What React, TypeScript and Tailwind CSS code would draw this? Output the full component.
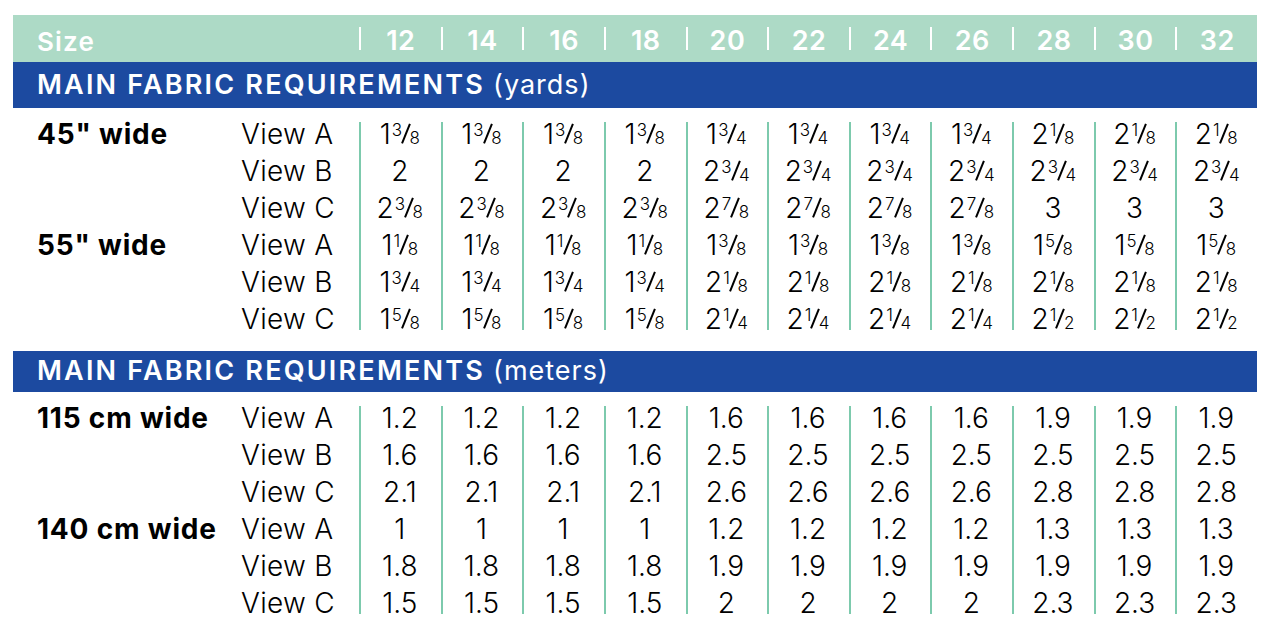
import React from 'react';

const sizes = ['12', '14', '16', '18', '20', '22', '24', '26', '28', '30', '32'];

interface Group {
  label: string;
  views: { name: string; values: string[] }[];
}

// fractions are written as "1 3/8" and drawn as stacked numerals
const yards: Group[] = [
  {
    label: '45" wide',
    views: [
      { name: 'View A', values: ['1 3/8', '1 3/8', '1 3/8', '1 3/8', '1 3/4', '1 3/4', '1 3/4', '1 3/4', '2 1/8', '2 1/8', '2 1/8'] },
      { name: 'View B', values: ['2', '2', '2', '2', '2 3/4', '2 3/4', '2 3/4', '2 3/4', '2 3/4', '2 3/4', '2 3/4'] },
      { name: 'View C', values: ['2 3/8', '2 3/8', '2 3/8', '2 3/8', '2 7/8', '2 7/8', '2 7/8', '2 7/8', '3', '3', '3'] },
    ],
  },
  {
    label: '55" wide',
    views: [
      { name: 'View A', values: ['1 1/8', '1 1/8', '1 1/8', '1 1/8', '1 3/8', '1 3/8', '1 3/8', '1 3/8', '1 5/8', '1 5/8', '1 5/8'] },
      { name: 'View B', values: ['1 3/4', '1 3/4', '1 3/4', '1 3/4', '2 1/8', '2 1/8', '2 1/8', '2 1/8', '2 1/8', '2 1/8', '2 1/8'] },
      { name: 'View C', values: ['1 5/8', '1 5/8', '1 5/8', '1 5/8', '2 1/4', '2 1/4', '2 1/4', '2 1/4', '2 1/2', '2 1/2', '2 1/2'] },
    ],
  },
];

const meters: Group[] = [
  {
    label: '115 cm wide',
    views: [
      { name: 'View A', values: ['1.2', '1.2', '1.2', '1.2', '1.6', '1.6', '1.6', '1.6', '1.9', '1.9', '1.9'] },
      { name: 'View B', values: ['1.6', '1.6', '1.6', '1.6', '2.5', '2.5', '2.5', '2.5', '2.5', '2.5', '2.5'] },
      { name: 'View C', values: ['2.1', '2.1', '2.1', '2.1', '2.6', '2.6', '2.6', '2.6', '2.8', '2.8', '2.8'] },
    ],
  },
  {
    label: '140 cm wide',
    views: [
      { name: 'View A', values: ['1', '1', '1', '1', '1.2', '1.2', '1.2', '1.2', '1.3', '1.3', '1.3'] },
      { name: 'View B', values: ['1.8', '1.8', '1.8', '1.8', '1.9', '1.9', '1.9', '1.9', '1.9', '1.9', '1.9'] },
      { name: 'View C', values: ['1.5', '1.5', '1.5', '1.5', '2', '2', '2', '2', '2.3', '2.3', '2.3'] },
    ],
  },
];

const Amount = ({ value }: { value: string }) => {
  const [whole, frac] = value.split(' ');
  if (!frac) return <span>{whole}</span>;
  const [num, den] = frac.split('/');
  return (
    <span className="whitespace-nowrap inline-flex items-baseline">
      <span>{whole}</span>
      <span className="relative -top-[8px] ml-[1px] text-[17px] leading-none">{num}</span>
      {/* fraction bar */}
      <span className="inline-block w-[1.5px] h-[21px] mx-[3px] bg-black rotate-[22deg]" />
      <span className="text-[17px] leading-none">{den}</span>
    </span>
  );
};

const SectionBar = ({ title, unit, className }: { title: string; unit: string; className: string }) => (
  <div className={`flex items-center bg-[#1c4aa0] pl-[24px] text-white text-[27px] ${className}`}>
    <span className="font-semibold tracking-[2.2px]">{title}</span>
    <span className="ml-[8px] font-normal tracking-[1px]">({unit})</span>
  </div>
);

const SectionBody = ({ groups }: { groups: Group[] }) => {
  // flatten rows so label only shows on the first view of each group
  const rows = groups.flatMap(g => g.views.map((v, i) => ({ label: i === 0 ? g.label : '', ...v })));

  return (
    <div className="flex pl-[24px] text-[28px] text-black font-light">
      <div className="w-[204px] flex flex-col">
        {rows.map((r, i) => (
          <div key={i} className="h-[37px] flex items-center font-bold tracking-[0.8px]">{r.label}</div>
        ))}
      </div>
      <div className="w-[118px] flex flex-col">
        {rows.map((r, i) => (
          <div key={i} className="h-[37px] flex items-center tracking-[0.3px]">{r.name}</div>
        ))}
      </div>
      {sizes.map((s, col) => (
        <div key={s} className="flex-1 my-[7px] border-l-2 border-[#7dcaad]">
          <div className="-my-[7px] -ml-[2px] flex flex-col">
            {rows.map((r, i) => (
              <div key={i} className="h-[37px] flex items-center justify-center">
                <Amount value={r.values[col]} />
              </div>
            ))}
          </div>
        </div>
      ))}
    </div>
  );
};

export default function App() {
  return (
    <div className="w-[1274px] h-[638px] bg-white pt-[15px] pl-[13px] pr-[17px]" style={{ fontFamily: 'Inter, "Open Sans", sans-serif' }}>
      <div className="flex h-[47px] bg-[#addac6] text-white pl-[24px]">
        <div className="w-[322px] flex items-center pt-[6px] text-[26px] font-semibold tracking-[1.2px]">Size</div>
        {sizes.map(s => (
          <div key={s} className="flex-1 my-[12px] border-l-2 border-white">
            <div className="-my-[12px] h-[47px] flex items-center justify-center pt-[5px] text-[27px] font-semibold tracking-[0.5px]">{s}</div>
          </div>
        ))}
      </div>
      <SectionBar title="MAIN FABRIC REQUIREMENTS" unit="yards" className="h-[46px]" />
      <div className="h-[7px]" />
      <SectionBody groups={yards} />
      <div className="h-[14px]" />
      <SectionBar title="MAIN FABRIC REQUIREMENTS" unit="meters" className="h-[41px]" />
      <div className="h-[7px]" />
      <SectionBody groups={meters} />
    </div>
  );
}
